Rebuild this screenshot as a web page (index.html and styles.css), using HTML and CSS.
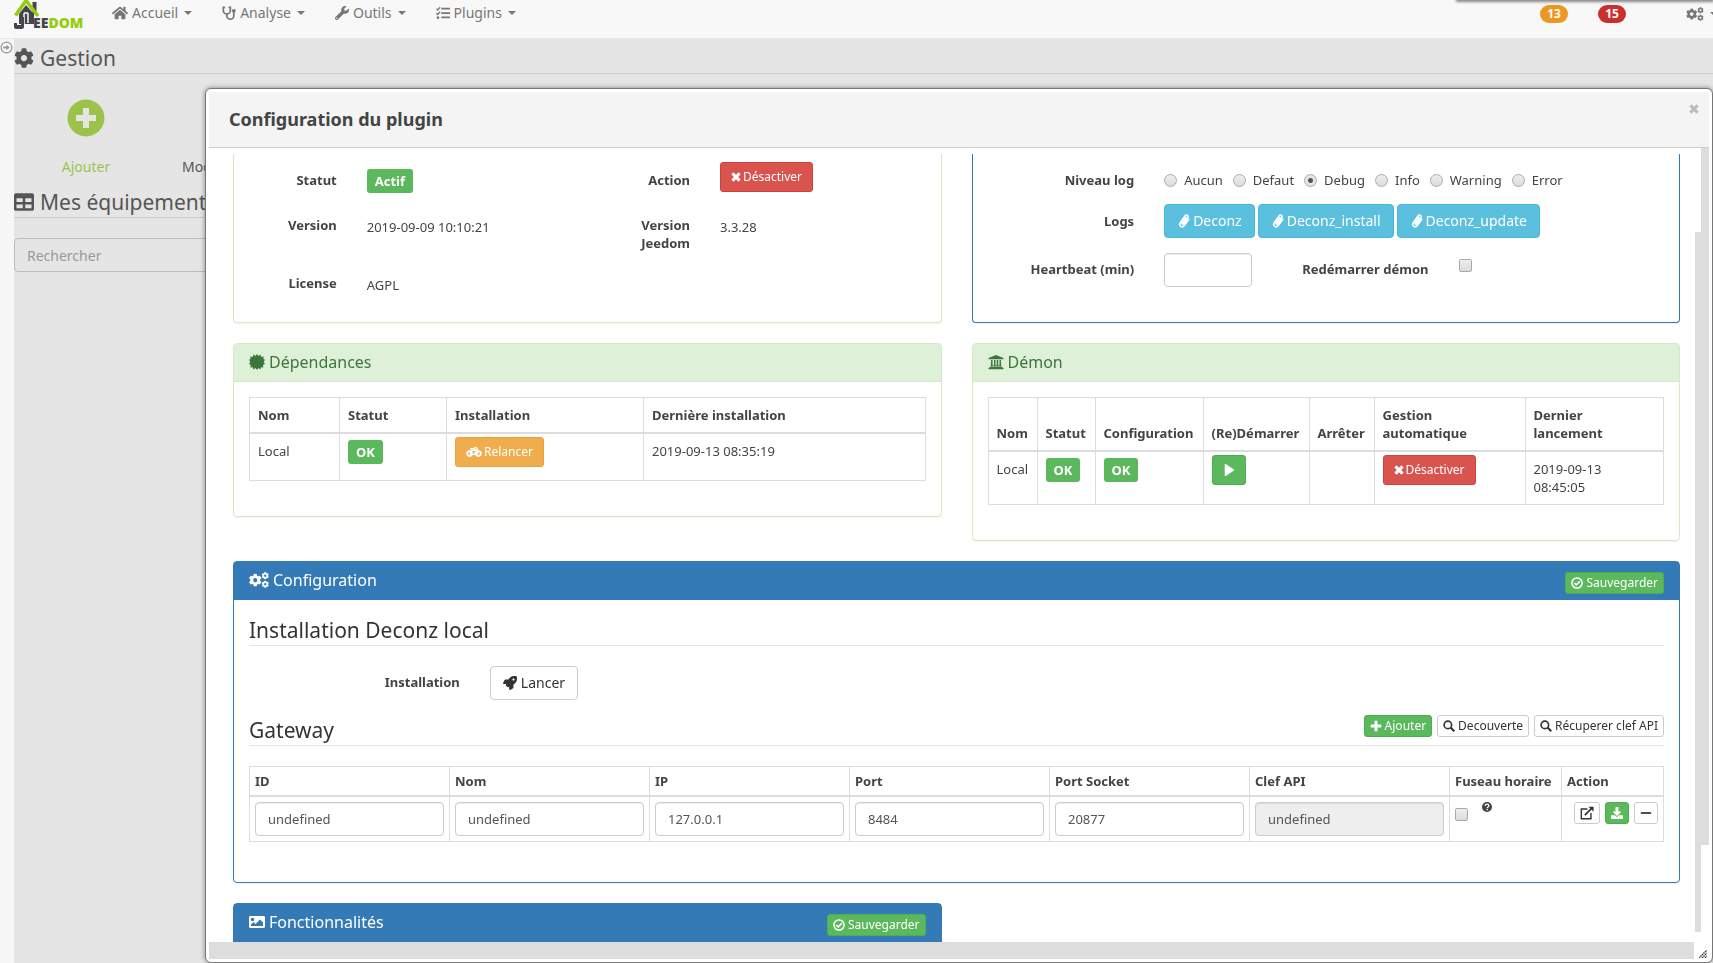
FILE: index.html
```html
<!DOCTYPE html>
<html lang="fr">
<head>
<meta charset="utf-8">
<title>Jeedom - Configuration du plugin</title>
<link rel="stylesheet" href="styles.css">
</head>
<body>
<svg class="sprite" aria-hidden="true">
  <symbol id="cog" viewBox="0 0 512 512"><path d="M487.4 315.7l-42.6-24.6c4.3-23.2 4.3-47 0-70.2l42.6-24.6c4.9-2.8 7.1-8.6 5.5-14-11.1-35.6-30-67.8-54.7-94.6-3.8-4.1-10-5.1-14.8-2.3L380.8 110c-17.9-15.4-38.5-27.3-60.8-35.1V25.8c0-5.6-3.9-10.5-9.4-11.7-36.7-8.2-74.3-7.8-109.2 0-5.5 1.2-9.4 6.1-9.4 11.7V75c-22.2 7.9-42.8 19.8-60.8 35.1L88.7 85.5c-4.9-2.8-11-1.9-14.8 2.3-24.7 26.7-43.6 58.9-54.7 94.6-1.7 5.4.6 11.2 5.5 14L67.3 221c-4.3 23.2-4.3 47 0 70.2l-42.6 24.6c-4.9 2.8-7.1 8.6-5.5 14 11.1 35.6 30 67.8 54.7 94.6 3.8 4.1 10 5.1 14.8 2.3l42.6-24.6c17.9 15.4 38.5 27.3 60.8 35.1v49.2c0 5.6 3.9 10.5 9.4 11.7 36.7 8.2 74.3 7.8 109.2 0 5.5-1.2 9.4-6.1 9.4-11.7v-49.2c22.2-7.9 42.8-19.8 60.8-35.1l42.6 24.6c4.9 2.8 11 1.9 14.8-2.3 24.7-26.7 43.6-58.9 54.7-94.6 1.5-5.5-.7-11.3-5.6-14.1zM256 336c-44.1 0-80-35.9-80-80s35.9-80 80-80 80 35.9 80 80-35.9 80-80 80z"/></symbol>
  <symbol id="cogs" viewBox="0 0 640 512"><use href="#cog" x="-10" y="50" width="420" height="420"/><use href="#cog" x="400" y="0" width="240" height="240"/><use href="#cog" x="400" y="272" width="240" height="240"/></symbol>
  <symbol id="table" viewBox="0 0 512 512"><path d="M464 32H48C21.5 32 0 53.500 0 80v352c0 26.500 21.500 48 48 48h416c26.500 0 48-21.500 48-48V80c0-26.500-21.500-48-48-48zM224 416H64v-96h160v96zm0-160H64v-96h160v96zm224 160H288v-96h160v96zm0-160H288v-96h160v96z"/></symbol>
  <symbol id="home" viewBox="0 0 576 512"><path d="M280.370 148.260L96 300.110V464a16 16 0 0 0 16 16l112.060-.290a16 16 0 0 0 15.920-16V368a16 16 0 0 1 16-16h64a16 16 0 0 1 16 16v95.640a16 16 0 0 0 16 16.050L464 480a16 16 0 0 0 16-16V300L295.670 148.260a12.190 12.190 0 0 0-15.300 0zM571.600 251.470L488 182.560V44.050a12 12 0 0 0-12-12h-56a12 12 0 0 0-12 12v72.610L318.470 43a48 48 0 0 0-61 0L4.340 251.470a12 12 0 0 0-1.600 16.900l25.500 31A12 12 0 0 0 45.150 301l235.220-193.740a12.190 12.190 0 0 1 15.300 0L530.900 301a12 12 0 0 0 16.900-1.600l25.500-31a12 12 0 0 0-1.700-16.930z"/></symbol>
  <symbol id="stetho" viewBox="0 0 16 16"><path d="M3.500 1.500H1.500V5a4 4 0 0 0 8 0V1.500h-2M5.500 9v2a4 4 0 0 0 8 0V7" fill="none" stroke="currentColor" stroke-width="2"/><circle cx="13.500" cy="5.500" r="2.200"/></symbol>
  <symbol id="wrench" viewBox="0 0 512 512"><path d="M507.730 109.100c-2.240-9.030-13.540-12.090-20.120-5.510l-74.360 74.360-67.880-11.310-11.310-67.880 74.360-74.360c6.620-6.620 3.430-17.900-5.660-20.160-47.380-11.740-99.550.910-136.580 37.930-39.640 39.640-50.550 97.100-34.050 147.200L18.740 402.760c-24.990 24.990-24.990 65.510 0 90.500 24.990 24.990 65.510 24.990 90.500 0l213.210-213.210c50.120 16.710 107.470 5.680 147.370-34.220 37.070-37.070 49.700-89.320 37.910-136.730zM64 472c-13.260 0-24-10.750-24-24 0-13.260 10.750-24 24-24s24 10.750 24 24c0 13.250-10.750 24-24 24z"/></symbol>
  <symbol id="tasks" viewBox="0 0 16 16"><path d="M0.500 3l1.500 1.500L4.800 1.300M0.500 8.200L2 9.700l2.800-3.200" fill="none" stroke="currentColor" stroke-width="1.500"/><circle cx="2.200" cy="13.300" r="1.500"/><path d="M6 2h10v2H6zM6 7h10v2H6zM6 12h10v2H6z"/></symbol>
  <symbol id="times" viewBox="0 0 14 14"><path d="M3.500 .5L7 4 10.500 .5 13.500 3.500 10 7l3.500 3.500-3 3L7 10l-3.500 3.500-3-3L4 7 .5 3.500z"/></symbol>
  <symbol id="plus" viewBox="0 0 14 14"><path d="M5.300 .8h3.400v4.500h4.500v3.400H8.700v4.500H5.300V8.700H.8V5.300h4.500z"/></symbol>
  <symbol id="minus" viewBox="0 0 14 14"><path d="M1 6h12v2H1z"/></symbol>
  <symbol id="clip" viewBox="0 0 14 16"><path d="M9.300 4L5 10.200c-.7 1.200.8 2.100 1.600 1l4.700-6.700c1.500-2.500-1.500-4.400-3.200-2.200L2.700 10c-2.200 3.600 2.200 6.400 4.600 3.200l5-7" fill="none" stroke="currentColor" stroke-width="1.800" stroke-linecap="round"/></symbol>
  <symbol id="cert" viewBox="0 0 32 32"><path d="M16 0l3 4 4-3 1.500 5 5-1-.8 5 3.300 1.500L29.500 16l2.500 4-4.300 1.800L29 27l-5-.5L23 31l-4-3-3 4-3-4-4 3-1.500-4.500-5 .5 1.300-5.200L0 20l2.500-4L0 11.500 3.300 10l-.8-5 5 1L9 1l4 3z"/></symbol>
  <symbol id="bank" viewBox="0 0 16 16"><path d="M8 1l7.500 3v1.200H.5V4zM1.500 12.800h13V14h1v1.200H.5V14h1zM3 6h1.600v6H3zM6 6h1.500v6H6zM8.700 6h1.500v6H8.700zM11.500 6H13v6h-1.500zM2.500 11.500h11v.8h-11z"/></symbol>
  <symbol id="bike" viewBox="0 0 20 14"><circle cx="4.500" cy="9" r="3" fill="none" stroke="currentColor" stroke-width="2.300"/><circle cx="15.500" cy="9" r="3" fill="none" stroke="currentColor" stroke-width="2.300"/><path d="M5 3h5l5.500 6M4.500 9l3-4h6l-3 5H5M10 1.500h3l1.500 3" fill="none" stroke="currentColor" stroke-width="1.800"/></symbol>
  <symbol id="rocket" viewBox="0 0 512 512"><path d="M505.120 19.090c-1.190-5.500-6.660-11-12.210-12.200C460.700 0 435.500 0 410.400 0 307.200 0 245.300 55.200 199.100 128H94.900c-18.200 0-34.800 10.300-42.900 26.500L2.600 253.300c-8 16 3.600 34.700 21.500 34.700h95.100c-5.900 12.800-11.900 25.500-18 37.700-3.100 6.200-1.900 13.600 3 18.500l63.600 63.600c4.900 4.900 12.300 6.100 18.500 3 12.200-6.100 24.900-12 37.700-17.900V488c0 17.800 18.800 29.400 34.700 21.500l98.700-49.400c16.300-8.100 26.500-24.800 26.500-42.900V312.800c72.600-46.400 128-108.400 128-211.100.1-25.200.1-50.400-6.800-82.600zM384 168c-22.100 0-40-17.900-40-40s17.900-40 40-40 40 17.900 40 40-17.900 40-40 40z"/></symbol>
  <symbol id="check" viewBox="0 0 16 16"><circle cx="8" cy="8" r="6.800" fill="none" stroke="currentColor" stroke-width="2"/><path d="M4.500 8.200l2.500 2.400 4.600-4.800" fill="none" stroke="currentColor" stroke-width="2.200"/></symbol>
  <symbol id="search" viewBox="0 0 16 16"><circle cx="6.500" cy="6.500" r="5" fill="none" stroke="currentColor" stroke-width="2.200"/><path d="M10 10l5 5" stroke="currentColor" stroke-width="2.800"/></symbol>
  <symbol id="play" viewBox="0 0 14 14"><path d="M2 .8c0-.7.6-1 1.200-.7l9.500 6.200c.6.400.6 1 0 1.400l-9.500 6.200c-.6.300-1.200 0-1.200-.7z"/></symbol>
  <symbol id="image" viewBox="0 0 512 512"><path d="M464 448H48c-26.510 0-48-21.490-48-48V112c0-26.510 21.490-48 48-48h416c26.510 0 48 21.490 48 48v288c0 26.510-21.490 48-48 48zM112 120c-30.928 0-56 25.072-56 56s25.072 56 56 56 56-25.072 56-56-25.072-56-56-56zM64 384h384V272l-87.515-87.515c-4.686-4.686-12.284-4.686-16.971 0L208 320l-55.515-55.515c-4.686-4.686-12.284-4.686-16.971 0L64 336v48z"/></symbol>
  <symbol id="external" viewBox="0 0 16 16"><path d="M8.500 3.500H1.500v11h11V8" fill="none" stroke="currentColor" stroke-width="1.600"/><path d="M5.500 10.500L13 3" stroke="currentColor" stroke-width="2"/><path d="M9.800 0.800H15.500V6.500z"/></symbol>
  <symbol id="download" viewBox="0 0 512 512"><path d="M216 0h80c13.300 0 24 10.700 24 24v168h87.700c17.800 0 26.700 21.500 14.100 34.100L269.700 378.300c-7.500 7.500-19.800 7.500-27.300 0L90.100 226.100c-12.600-12.600-3.700-34.100 14.100-34.100H192V24c0-13.300 10.700-24 24-24zm296 376v112c0 13.300-10.700 24-24 24H24c-13.300 0-24-10.700-24-24V376c0-13.300 10.700-24 24-24h146.700l49 49c20.100 20.100 52.500 20.100 72.600 0l49-49H488c13.300 0 24 10.700 24 24zm-124 88c0-11-9-20-20-20s-20 9-20 20 9 20 20 20 20-9 20-20zm64 0c0-11-9-20-20-20s-20 9-20 20 9 20 20 20 20-9 20-20z"/></symbol>
  <symbol id="help" viewBox="0 0 16 16"><circle cx="8" cy="8" r="8"/><path d="M5 6.200c.3-3.600 6-3.400 6-.2 0 2-2.700 1.900-2.700 3.800" fill="none" stroke="#fff" stroke-width="2"/><path d="M7.200 11h2.200v2.200H7.200z" fill="#fff"/></symbol>
</svg>

<header class="navbar">
  <a class="brand" href="#" aria-label="Jeedom">
    <svg class="brand-house" viewBox="0 0 26 30" aria-hidden="true">
      <path d="M18.500 2h4v12h-4z" fill="#44464b"/>
      <path d="M12 5l8 9v10H5v-10z" fill="#44464b"/>
      <path d="M10 13V25.500q0 2-2 2H1V23M14 13v10M10 13h4" fill="none" stroke="#f8f8f8" stroke-width="1.500"/>
      <path d="M0 23h3v2h4v-8h3v9.500q0 2.500-2.500 2.500H2q-2 0-2-2z" fill="#44464b"/>
      <path d="M1.500 15.500L12 .5 24 16" fill="none" stroke="#95cc0d" stroke-width="3.500"/>
    </svg>
    <span class="brand-text">EE<em>DOM</em></span>
  </a>
  <nav class="menu">
    <a href="#"><svg class="i16"><use href="#home"/></svg>Accueil<i class="caret"></i></a>
    <a href="#"><svg class="i14"><use href="#stetho"/></svg>Analyse<i class="caret"></i></a>
    <a href="#"><svg class="i14"><use href="#wrench"/></svg>Outils<i class="caret"></i></a>
    <a href="#"><svg class="i14"><use href="#tasks"/></svg>Plugins<i class="caret"></i></a>
  </nav>
  <div class="nav-right">
    <a href="#" class="pill pill-orange">13</a>
    <a href="#" class="pill pill-red">15</a>
    <a href="#" class="settings" aria-label="Réglages"><svg class="i18"><use href="#cogs"/></svg><i class="caret"></i></a>
  </div>
  <div class="top-shade"></div>
</header>

<div class="page">
  <aside class="rail">
    <svg class="rail-icon" viewBox="0 0 14 14"><circle cx="7" cy="7" r="5.800" fill="none" stroke="currentColor" stroke-width="1.300"/><path d="M3.500 6h3.500V4l3.500 3L7 10V8H3.500z"/></svg>
  </aside>
  <main class="main">
    <h1 class="legend"><svg class="i20"><use href="#cog"/></svg>Gestion</h1>
    <div class="tiles">
      <a href="#" class="tile tile-add"><svg class="tile-icon" viewBox="0 0 38 38"><circle cx="19" cy="19" r="18.500"/><path d="M16 9h6v7h7v6h-7v7h-6v-7H9v-6h7z" fill="#e5e5e5"/></svg>Ajouter</a>
      <a href="#" class="tile">Mode inclusion</a>
    </div>
    <h1 class="legend"><svg class="i20"><use href="#table"/></svg>Mes équipements</h1>
    <input class="search" type="text" placeholder="Rechercher" aria-label="Rechercher">
  </main>
</div>

<section class="dialog" role="dialog" aria-labelledby="dlg-title">
  <div class="titlebar">
    <h2 id="dlg-title">Configuration du plugin</h2>
    <button class="close" aria-label="Fermer"><svg class="i10"><use href="#times"/></svg></button>
  </div>
  <div class="dialog-body">
    <div class="content">
      <div class="pair">
        <section class="panel panel-green panel-cut">
          <dl class="info">
            <dt>Statut</dt><dd><span class="label">Actif</span></dd>
            <dt>Action</dt><dd class="flush"><button class="btn btn-sm btn-red"><svg class="i10"><use href="#times"/></svg>Désactiver</button></dd>
            <dt>Version</dt><dd>2019-09-09 10:10:21</dd>
            <dt>Version Jeedom</dt><dd>3.3.28</dd>
            <dt>License</dt><dd>AGPL</dd>
          </dl>
        </section>
        <section class="panel panel-blue panel-cut">
          <div class="logs">
            <div class="row">
              <span class="name">Niveau log</span>
              <div class="radios">
                <label><input type="radio" name="lvl">Aucun</label>
                <label><input type="radio" name="lvl">Defaut</label>
                <label><input type="radio" name="lvl" checked>Debug</label>
                <label><input type="radio" name="lvl">Info</label>
                <label><input type="radio" name="lvl">Warning</label>
                <label><input type="radio" name="lvl">Error</label>
              </div>
            </div>
            <div class="row">
              <span class="name">Logs</span>
              <div class="log-buttons">
                <button class="btn btn-cyan"><svg class="i14"><use href="#clip"/></svg>Deconz</button>
                <button class="btn btn-cyan"><svg class="i14"><use href="#clip"/></svg>Deconz_install</button>
                <button class="btn btn-cyan"><svg class="i14"><use href="#clip"/></svg>Deconz_update</button>
              </div>
            </div>
            <div class="row row-beat">
              <label class="name" for="beat">Heartbeat (min)</label>
              <div class="cell"><input class="field" id="beat" type="text"></div>
              <label class="name" for="restart">Redémarrer démon</label>
              <div class="cell"><input type="checkbox" id="restart"></div>
            </div>
          </div>
        </section>
      </div>

      <div class="pair">
        <section class="panel panel-green">
          <h3 class="head"><svg class="i16"><use href="#cert"/></svg>Dépendances</h3>
          <div class="body">
            <table class="grid">
              <colgroup><col class="w-90"><col class="w-107"><col class="w-197"><col></colgroup>
              <thead><tr><th>Nom</th><th>Statut</th><th>Installation</th><th>Dernière installation</th></tr></thead>
              <tbody><tr><td>Local</td><td class="tight"><span class="label">OK</span></td><td class="tight"><button class="btn btn-sm btn-orange"><svg class="i16"><use href="#bike"/></svg>Relancer</button></td><td>2019-09-13 08:35:19</td></tr></tbody>
            </table>
          </div>
        </section>
        <section class="panel panel-green">
          <h3 class="head"><svg class="i16"><use href="#bank"/></svg>Démon</h3>
          <div class="body">
            <table class="grid">
              <colgroup><col class="w-49"><col class="w-58"><col class="w-108"><col class="w-106"><col class="w-65"><col class="w-151"><col></colgroup>
              <thead><tr><th>Nom</th><th>Statut</th><th>Configuration</th><th>(Re)Démarrer</th><th>Arrêter</th><th>Gestion automatique</th><th>Dernier<br>lancement</th></tr></thead>
              <tbody><tr><td>Local</td><td class="tight"><span class="label">OK</span></td><td class="tight"><span class="label">OK</span></td><td class="tight"><button class="btn btn-sm btn-green" aria-label="Démarrer"><svg class="i12"><use href="#play"/></svg></button></td><td></td><td class="tight"><button class="btn btn-sm btn-red"><svg class="i10"><use href="#times"/></svg>Désactiver</button></td><td>2019-09-13 08:45:05</td></tr></tbody>
            </table>
          </div>
        </section>
      </div>

      <section class="panel panel-blue">
        <h3 class="head"><svg class="i20"><use href="#cogs"/></svg>Configuration<button class="btn btn-xs btn-green end"><svg class="i12"><use href="#check"/></svg>Sauvegarder</button></h3>
        <div class="body">
          <h4 class="sub">Installation Deconz local</h4>
          <div class="install">
            <span class="name">Installation</span>
            <button class="btn btn-white"><svg class="i14"><use href="#rocket"/></svg>Lancer</button>
          </div>
          <h4 class="sub">Gateway
            <span class="tools">
              <button class="btn btn-xs btn-green"><svg class="i12"><use href="#plus"/></svg>Ajouter</button>
              <button class="btn btn-xs btn-white"><svg class="i12"><use href="#search"/></svg>Decouverte</button>
              <button class="btn btn-xs btn-white"><svg class="i12"><use href="#search"/></svg>Récuperer clef API</button>
            </span>
          </h4>
          <table class="grid grid-dense">
            <colgroup><col><col><col><col><col><col><col class="w-112"><col class="w-102"></colgroup>
            <thead><tr><th>ID</th><th>Nom</th><th>IP</th><th>Port</th><th>Port Socket</th><th>Clef API</th><th>Fuseau horaire</th><th>Action</th></tr></thead>
            <tbody><tr>
              <td><input class="field" type="text" value="undefined" aria-label="ID"></td>
              <td><input class="field" type="text" value="undefined" aria-label="Nom"></td>
              <td><input class="field" type="text" value="127.0.0.1" aria-label="IP"></td>
              <td><input class="field" type="text" value="8484" aria-label="Port"></td>
              <td><input class="field" type="text" value="20877" aria-label="Port Socket"></td>
              <td><input class="field" type="text" value="undefined" aria-label="Clef API" disabled></td>
              <td><div class="zone"><input type="checkbox" aria-label="Fuseau horaire"><svg class="i10"><use href="#help"/></svg></div></td>
              <td><div class="actions">
                <button class="btn btn-xs btn-white" aria-label="Ouvrir"><svg class="i14"><use href="#external"/></svg></button>
                <button class="btn btn-xs btn-green" aria-label="Télécharger"><svg class="i12"><use href="#download"/></svg></button>
                <button class="btn btn-xs btn-white" aria-label="Supprimer"><svg class="i12"><use href="#minus"/></svg></button>
              </div></td>
            </tr></tbody>
          </table>
        </div>
      </section>

      <div class="pair">
        <section class="panel panel-blue">
          <h3 class="head"><svg class="i16"><use href="#image"/></svg>Fonctionnalités<button class="btn btn-xs btn-green end"><svg class="i12"><use href="#check"/></svg>Sauvegarder</button></h3>
          <div class="body"></div>
        </section>
      </div>
    </div>
    <div class="track track-inner"></div>
    <div class="track track-outer"></div>
  </div>
  <div class="bottom-bar">
    <div class="bottom-track"></div>
    <svg class="grip" viewBox="0 0 8 8"><path d="M0 8L8 0M3 8l5-5M6 8l2-2" stroke="#333" stroke-width="1.300" stroke-dasharray="1.500 .6"/></svg>
  </div>
</section>
</body>
</html>
```
FILE: styles.css
```css
* { box-sizing: border-box; }
body {
  margin: 0;
  height: 100vh;
  overflow: hidden;
  display: flex;
  flex-direction: column;
  background: #e5e5e5;
  color: #444;
  font: 13px/18px "Noto Sans", sans-serif;
}
button, input { font: inherit; }
a { color: inherit; text-decoration: none; }
svg { fill: currentColor; flex: none; }
.sprite { position: absolute; width: 0; height: 0; }
.i10 { width: 10px; height: 10px; }
.i12 { width: 12px; height: 12px; }
.i14 { width: 14px; height: 14px; }
.i16 { width: 16px; height: 16px; }
.i18 { width: 18px; height: 14px; }
.i20 { width: 20px; height: 20px; }

/* Navigation */
.navbar {
  position: relative;
  display: flex;
  align-items: flex-start;
  height: 39px;
  padding-left: 14px;
  background: #f8f8f8;
  border-bottom: 1px solid #e7e7e7;
  color: #777;
}
.brand { display: flex; width: 98px; }
.brand-house { width: 26px; height: 30px; margin-right: -7px; }
.brand-text {
  padding-top: 14px;
  font: 800 14px/18px "Open Sans", sans-serif;
  color: #44464b;
}
.brand-text em { font-style: normal; color: #95cc0d; }
.menu { display: flex; gap: 30px; }
.menu a { display: flex; align-items: center; gap: 4px; height: 26px; font-size: 14px; }
.caret {
  border: 4px solid transparent;
  border-top-color: currentColor;
  border-bottom: 0;
  margin-left: 2px;
}
.nav-right { display: flex; align-items: center; height: 26px; margin-left: auto; padding-top: 2px; }
.pill {
  width: 28px;
  height: 18px;
  margin-right: 30px;
  border-radius: 9px;
  color: #fff;
  font-size: 12px;
  font-weight: 700;
  text-align: center;
}
.pill-orange { background: #ec971f; }
.pill-red { background: #c9302c; }
.settings { display: flex; align-items: center; gap: 4px; width: 57px; padding-left: 30px; overflow: hidden; }
.top-shade {
  position: absolute;
  top: -4px;
  right: 0;
  width: 256px;
  height: 4px;
  box-shadow: 0 1px 3px 1px #888;
}

/* Page behind the dialog */
.page { display: flex; flex: 1; }
.rail { width: 14px; background: #f7f7f7; color: #999; }
.rail-icon { display: block; width: 13px; height: 13px; margin-top: 2px; }
.main { flex: 1; color: #555; }
.legend {
  display: flex;
  align-items: center;
  gap: 6px;
  height: 35px;
  margin: 0;
  padding-top: 4px;
  border-bottom: 1px solid #ccc;
  font-size: 21px;
  font-weight: 400;
  line-height: 30px;
}
.tiles { display: flex; height: 109px; }
.tile { width: 144px; padding-top: 84px; text-align: center; font-size: 14px; white-space: nowrap; }
.tile + .tile { padding-left: 4px; }
.tile-add { display: flex; flex-direction: column; align-items: center; gap: 21px; padding-top: 25px; color: #9bc34c; }
.tile-icon { width: 38px; height: 38px; }
.search {
  display: block;
  width: 100%;
  height: 34px;
  margin-top: 20px;
  padding: 0 12px;
  border: 1px solid #bbb;
  border-radius: 4px;
  background: #e5e5e5;
  font-size: 14px;
}
.search::placeholder { color: #999; }

/* Dialog */
.dialog {
  position: fixed;
  inset: 88px 0 0 205px;
  display: flex;
  flex-direction: column;
  padding: 3px;
  background: #fff;
  border: 1px solid #777;
  border-radius: 6px;
  box-shadow: 0 0 5px rgba(0, 0, 0, .45);
}
.titlebar {
  display: flex;
  justify-content: space-between;
  align-items: flex-start;
  height: 56px;
  padding: 12px 10px 0 20px;
  background: #f4f4f4;
  border-bottom: 1px solid #ccc;
  border-radius: 4px 4px 0 0;
}
.titlebar h2 { margin: 0; font-size: 18px; line-height: 30px; color: #444; }
.close { padding: 0; border: 0; background: none; color: #bbb; line-height: 10px; }
.dialog-body { flex: 1; min-height: 0; display: flex; }
.content { flex: 1; min-width: 0; margin-top: 6px; padding: 0 15px 0 24px; overflow: hidden; }
.track-inner { width: 6px; margin: 84px 0 10px; background: #ddd; }
.track-outer { width: 8px; margin-bottom: 97px; background: #ddd; }
.bottom-bar { display: flex; align-items: center; justify-content: space-between; }
.bottom-track { flex: 1; height: 17px; background: #ddd; }
.grip { width: 8px; height: 8px; margin: 6px 2px 0 5px; fill: none; }

/* Panels */
.pair { display: grid; grid-template-columns: 1fr 1fr; gap: 30px; align-items: start; }
.panel {
  margin-bottom: 20px;
  background: #fff;
  border: 1px solid;
  border-radius: 4px;
  box-shadow: 0 1px 1px rgba(0, 0, 0, .05);
}
.panel-green { border-color: #d6e9c6; }
.panel-blue { border-color: #337ab7; }
.panel-cut { height: 169px; border-top: 0; border-radius: 0 0 4px 4px; }
.head {
  display: flex;
  align-items: center;
  gap: 4px;
  height: 38px;
  margin: 0;
  padding: 0 15px 2px;
  font-size: 16px;
  font-weight: 400;
}
.panel-green .head { background: #dff0d8; border-bottom: 1px solid #d6e9c6; color: #3c763d; }
.panel-blue .head { background: #337ab7; color: #fff; }
.end { margin: 5px 0 0 auto; }
.body { padding: 15px 15px 35px; }

/* Forms */
.info {
  display: grid;
  grid-template-columns: 2fr 4fr 2fr 4fr;
  grid-template-rows: 45px 58px auto;
  margin: 0;
  padding-top: 8px;
}
.info dt { padding: 9px 15px 0; text-align: right; font-weight: 700; }
.info dd { margin: 0; padding: 11px 15px 0; }
.info .label { margin-top: -4px; }
.info .flush { padding-top: 0; }
.label {
  display: block;
  width: max-content;
  height: 24px;
  padding: 0 8px;
  border-radius: 3px;
  background: #5cb85c;
  color: #fff;
  font-weight: 700;
  line-height: 25px;
}
.logs { display: grid; gap: 15px; padding-top: 17px; }
.row { display: grid; grid-template-columns: 3fr 9fr; align-items: center; }
.row-beat { grid-template-columns: 3fr 2fr 3fr 4fr; }
.name { padding: 0 15px; text-align: right; font-weight: 700; }
.row-beat .name, .install .name { padding-bottom: 2px; }
.radios { display: flex; gap: 10px; padding-left: 15px; }
.radios label { display: flex; align-items: center; gap: 7px; }
.log-buttons { display: flex; gap: 3px; padding-left: 15px; }
.cell { padding: 0 15px; }
input[type="radio"], input[type="checkbox"] {
  appearance: none;
  display: block;
  width: 13px;
  height: 13px;
  margin: 0;
  border: 1px solid #aaa;
  border-radius: 2px;
  background: linear-gradient(#eee, #dcdcdc);
}
#restart { margin-bottom: 10px; }
input[type="radio"] { border-radius: 50%; }
input[type="radio"]:checked { background: radial-gradient(circle, #555 0 2px, #e4e4e4 3px); }
.field {
  display: block;
  width: 100%;
  height: 34px;
  padding: 0 12px;
  border: 1px solid #ccc;
  border-radius: 4px;
  background: #fff;
  box-shadow: inset 0 1px 1px rgba(0, 0, 0, .075);
  color: #555;
}
.field:disabled { background: #eee; }

/* Buttons */
.btn {
  display: flex;
  align-items: center;
  gap: 2px;
  height: 34px;
  padding: 0 12px;
  border: 1px solid;
  border-radius: 4px;
  color: #fff;
  font-size: 14px;
  white-space: nowrap;
}
.btn-sm { height: 30px; padding: 0 10px; border-radius: 3px; font-size: 12px; }
.btn-xs { gap: 3px; height: 22px; padding: 0 5px; border-radius: 3px; font-size: 12px; }
.btn-red { background: #d9534f; border-color: #d43f3a; }
.btn-green { background: #5cb85c; border-color: #4cae4c; }
.btn-orange { background: #f0ad4e; border-color: #eea236; }
.btn-cyan { background: #5bc0de; border-color: #46b8da; }
.btn-white { background: #fff; border-color: #ccc; color: #333; }

/* Tables */
.grid { width: 100%; table-layout: fixed; border-collapse: collapse; }
.grid th, .grid td { border: 1px solid #ddd; padding: 8px; text-align: left; }
.grid th { vertical-align: bottom; border-bottom-width: 2px; }
.grid td { vertical-align: top; height: 47px; }
.grid .tight { padding-top: 3px; padding-bottom: 0; }
.tight .label { margin-top: 3px; }
.grid-dense th, .grid-dense td { height: auto; padding: 5px; }
.w-49 { width: 49px; }
.w-58 { width: 58px; }
.w-65 { width: 65px; }
.w-90 { width: 90px; }
.w-102 { width: 102px; }
.w-106 { width: 106px; }
.w-107 { width: 107px; }
.w-108 { width: 108px; }
.w-112 { width: 112px; }
.w-151 { width: 151px; }
.w-197 { width: 197px; }

/* Plugin configuration */
.sub {
  display: flex;
  align-items: flex-end;
  justify-content: space-between;
  height: 31px;
  margin: 0 0 20px;
  border-bottom: 1px solid #e5e5e5;
  color: #333;
  font-size: 21px;
  font-weight: 400;
  line-height: 30px;
}
.tools { display: flex; gap: 5px; padding-bottom: 8px; }
.install {
  display: grid;
  grid-template-columns: 2fr 10fr;
  align-items: center;
  margin: 0 -15px 15px;
}
.install .btn { gap: 4px; justify-self: start; margin-left: 15px; }
.grid-dense { margin-bottom: 5px; }
.zone { display: flex; gap: 14px; }
.zone input { margin-top: 6px; }
.actions { display: flex; justify-content: flex-end; gap: 5px; }
```
